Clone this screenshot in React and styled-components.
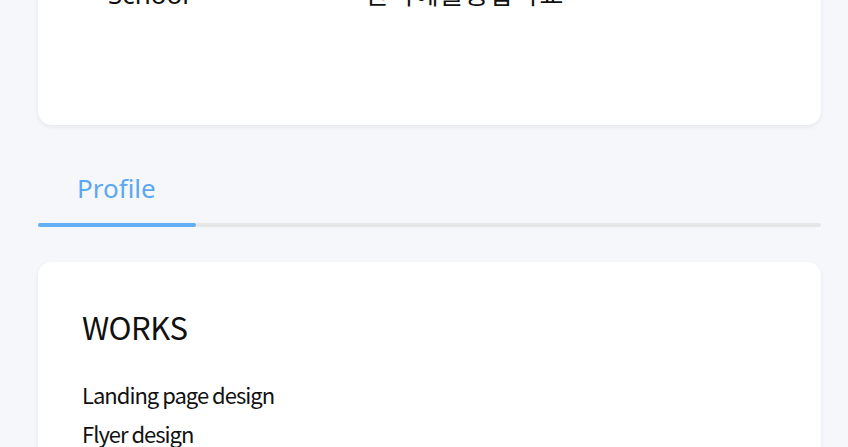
import React, { useState } from 'react';
import styled, { createGlobalStyle } from 'styled-components';

const GlobalStyle = createGlobalStyle`
  html, body {
    margin: 0;
    padding: 0;
    background: #f6f7fb;
    font-family: 'Noto Sans CJK KR', 'Noto Sans', sans-serif;
    color: #111;
    overflow: hidden;
  }
`;

const INFO = [{ label: 'School', value: '한국예술종합학교' }];

const TABS = ['Profile', 'Projects', 'Contact'];

const WORKS = ['Landing page design', 'Flyer design', 'Logo design'];

const App = () => {
  const [active] = useState(0);

  return (
    <>
      <GlobalStyle />
      <Page>
        <InfoCard>
          {INFO.map((row) => (
            <InfoRow key={row.label}>
              <InfoLabel>{row.label}</InfoLabel>
              <InfoValue>{row.value}</InfoValue>
            </InfoRow>
          ))}
        </InfoCard>

        <TabBar>
          <TabItem $active>{TABS[active]}</TabItem>
        </TabBar>
        <TabTrack>
          <TabIndicator />
        </TabTrack>

        <WorksCard>
          <SectionTitle>WORKS</SectionTitle>
          <WorkList>
            {WORKS.map((w) => (
              <li key={w}>{w}</li>
            ))}
          </WorkList>
        </WorksCard>
      </Page>
    </>
  );
};

export default App;

// --- Styled Components ---

const Page = styled.div`
  margin-top: -48px;
  padding: 0 27px 0 38px;
  display: flex;
  flex-direction: column;
`;

const Card = styled.div`
  background: #fff;
  border-radius: 14px;
  box-shadow: 0 2px 4px rgba(20, 30, 60, 0.07);
`;

const InfoCard = styled(Card)`
  padding: 25px 70px 116px;
`;

const InfoRow = styled.div`
  display: flex;
  align-items: baseline;
  height: 32px;
  line-height: 32px;
  font-size: 26px;
`;

const InfoLabel = styled.span`
  width: 257px;
  flex-shrink: 0;
  font-family: 'Noto Sans', sans-serif;
`;

const InfoValue = styled.span`
  letter-spacing: 1px;
`;

const TabBar = styled.div`
  display: flex;
  margin-top: 48px;
  padding-left: 39px;
  height: 36px;
`;

const TabItem = styled.div`
  font-family: 'Noto Sans', sans-serif;
  font-size: 26px;
  line-height: 30px;
  color: ${(p) => (p.$active ? '#5ba8ef' : '#999')};
`;

const TabTrack = styled.div`
  margin-top: 14px;
  height: 4px;
  border-radius: 2px;
  background: #e6e6e6;
`;

const TabIndicator = styled.div`
  width: 158px;
  height: 100%;
  border-radius: 2px;
  background: #62aff5;
`;

const WorksCard = styled(Card)`
  margin-top: 35px;
  padding: 45px 44px 40px;
`;

const SectionTitle = styled.h2`
  margin: 0;
  font-size: 31px;
  font-weight: 400;
  line-height: 40px;
  letter-spacing: -0.5px;
`;

const WorkList = styled.ul`
  list-style: none;
  margin: 28px 0 0;
  padding: 0;

  li {
    font-size: 22px;
    line-height: 39px;
    letter-spacing: -1px;
  }
`;
